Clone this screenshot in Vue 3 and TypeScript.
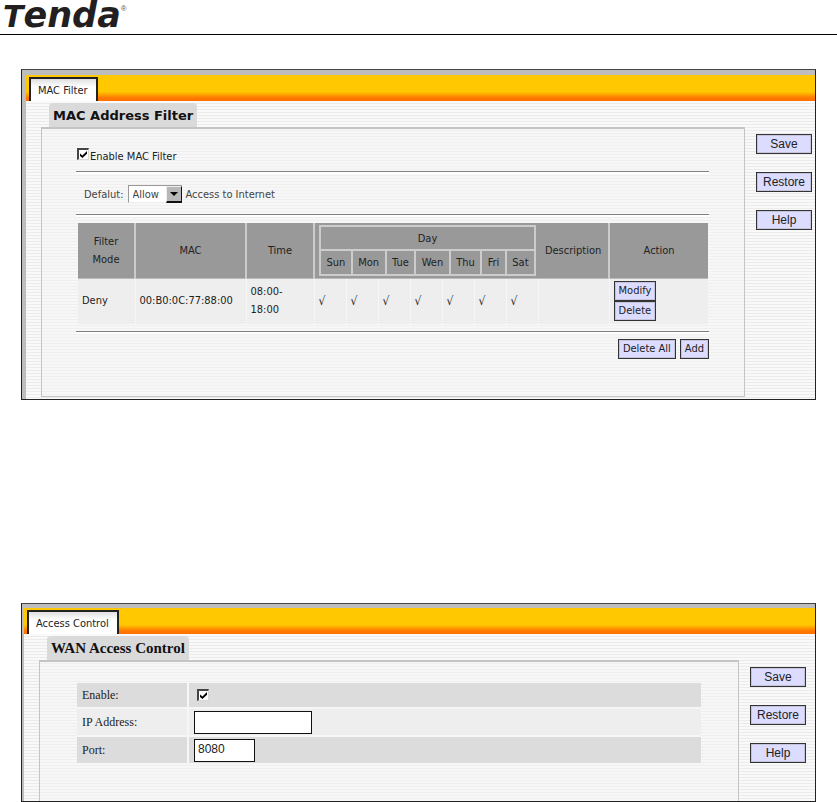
<script setup lang="ts">
import { ref } from 'vue'

interface FilterRule {
  mode: string
  mac: string
  time: string
  days: boolean[]
  description: string
}

const dayNames: string[] = ['Sun', 'Mon', 'Tue', 'Wen', 'Thu', 'Fri', 'Sat']
const sideActions: string[] = ['Save', 'Restore', 'Help']

const filterEnabled = ref(true)
const defaultPolicy = ref('Allow')
const rules = ref<FilterRule[]>([
  {
    mode: 'Deny',
    mac: '00:B0:0C:77:88:00',
    time: '08:00-18:00',
    days: [true, true, true, true, true, true, true],
    description: '',
  },
])

const wanEnabled = ref(true)
const wanIp = ref('')
const wanPort = ref('8080')
</script>

<template>
  <div class="page">
    <header class="brand">
      <span class="logo"><span class="cap">T</span>enda</span><span class="reg">®</span>
    </header>

    <section class="panel mac">
      <nav class="tabs"><a class="tab" href="#mac-filter">MAC Filter</a></nav>
      <div class="body">
        <div class="main">
          <h2 class="title">MAC Address Filter</h2>
          <div class="box">
            <div class="enable">
              <input id="mac-enable" v-model="filterEnabled" class="check" type="checkbox" />
              <label for="mac-enable">Enable MAC Filter</label>
            </div>
            <hr />
            <div class="policy">
              <label for="policy">Defalut:</label>
              <span class="picker">
                <select id="policy" v-model="defaultPolicy">
                  <option>Allow</option>
                  <option>Deny</option>
                </select>
                <span class="arrow"></span>
              </span>
              <span>Access to Internet</span>
            </div>
            <hr />
            <table class="rules">
              <colgroup>
                <col class="c-mode" />
                <col class="c-mac" />
                <col class="c-time" />
                <col v-for="d in dayNames" :key="d" class="c-day" />
                <col class="c-desc" />
                <col class="c-act" />
              </colgroup>
              <thead>
                <tr>
                  <th>Filter Mode</th>
                  <th>MAC</th>
                  <th>Time</th>
                  <th class="day-cell" colspan="7">
                    <div class="days">
                      <div class="day-head">Day</div>
                      <div class="day-row">
                        <span v-for="d in dayNames" :key="d">{{ d }}</span>
                      </div>
                    </div>
                  </th>
                  <th>Description</th>
                  <th>Action</th>
                </tr>
              </thead>
              <tbody>
                <tr v-for="rule in rules" :key="rule.mac">
                  <td>{{ rule.mode }}</td>
                  <td>{{ rule.mac }}</td>
                  <td>{{ rule.time }}</td>
                  <td v-for="(on, i) in rule.days" :key="i" class="tick">{{ on ? '√' : '' }}</td>
                  <td>{{ rule.description }}</td>
                  <td>
                    <div class="row-actions">
                      <button type="button" class="btn">Modify</button>
                      <button type="button" class="btn">Delete</button>
                    </div>
                  </td>
                </tr>
              </tbody>
            </table>
            <hr />
            <div class="footer">
              <button type="button" class="btn">Delete All</button>
              <button type="button" class="btn">Add</button>
            </div>
          </div>
        </div>
        <aside class="side">
          <button v-for="a in sideActions" :key="a" type="button" class="btn wide">{{ a }}</button>
        </aside>
      </div>
    </section>

    <section class="panel wan">
      <nav class="tabs"><a class="tab" href="#access-control">Access Control</a></nav>
      <div class="body">
        <div class="main">
          <h2 class="title serif">WAN Access Control</h2>
          <div class="box">
            <table class="form">
              <tbody>
                <tr>
                  <th><label for="wan-enable">Enable:</label></th>
                  <td><input id="wan-enable" v-model="wanEnabled" class="check" type="checkbox" /></td>
                </tr>
                <tr class="light">
                  <th><label for="wan-ip">IP Address:</label></th>
                  <td><input id="wan-ip" v-model="wanIp" class="field long" type="text" /></td>
                </tr>
                <tr>
                  <th><label for="wan-port">Port:</label></th>
                  <td><input id="wan-port" v-model="wanPort" class="field" type="text" /></td>
                </tr>
              </tbody>
            </table>
          </div>
        </div>
        <aside class="side">
          <button v-for="a in sideActions" :key="a" type="button" class="btn wide">{{ a }}</button>
        </aside>
      </div>
    </section>
  </div>
</template>

<style>
body {
  background: #fff;
}
</style>

<style scoped>
.page,
.page * {
  box-sizing: border-box;
}
.page {
  font-family: 'DejaVu Sans Condensed', 'DejaVu Sans', sans-serif;
  font-size: 11px;
  color: #222;
}
.brand {
  display: flex;
  height: 35px;
  padding-left: 3px;
  border-bottom: 1px solid #000;
}
.logo {
  font: italic 700 35px/31px 'DejaVu Sans', sans-serif;
  color: #231f20;
}
.logo .cap {
  font-size: 30px;
}
.reg {
  font: 8px/18px 'Liberation Sans', sans-serif;
  color: #555;
}

.panel {
  margin: 34px 21px 0;
  border: 1px solid #222;
  border-top-color: #444;
  background: #bdbdbd;
}
.mac {
  padding: 5px 0 0 4px;
}
.wan {
  margin-top: 203px;
  padding: 4px 0 0 2px;
}
.tabs {
  display: flex;
  align-items: flex-end;
  height: 26px;
  padding-left: 3px;
  background: linear-gradient(#ffc800 0, #ffc800 64%, #ff7800 88%, #ff7000 100%);
}
.tab {
  height: 24px;
  padding: 0 8px 0 7px;
  border: 2px solid #222;
  border-bottom: 0;
  background: linear-gradient(#e0e0e0, #fff 8px);
  color: #222;
  line-height: 24px;
  text-decoration: none;
}
.body {
  display: flex;
  background: repeating-linear-gradient(#f9f9f9 0, #f9f9f9 2px, #ebebeb 2px, #ebebeb 3px);
}
.main {
  flex: 1;
  min-width: 0;
  padding-left: 15px;
}
.title {
  width: max-content;
  height: 24px;
  margin: 2px 0 0 8px;
  padding: 0 4px;
  border-radius: 4px 4px 0 0;
  background: #dadada;
  font: 700 13px/26px 'DejaVu Sans', sans-serif;
  color: #111;
}
.title.serif {
  font: 700 15px/24px 'Liberation Serif', serif;
}
.box {
  padding: 0 35px 0 34px;
  border: 1px solid #c4c4c4;
  border-top-width: 2px;
  background: rgba(246, 246, 246, 0.4);
}
.mac .box {
  height: 270px;
  margin-bottom: 2px;
}
.wan .box {
  height: 141px;
  padding: 21px 37px 0;
  border-bottom: 0;
}
hr {
  height: 3px;
  margin: 0;
  border: 0;
  border-top: 1px solid #808080;
  background: #fff;
}
.enable {
  display: flex;
  align-items: center;
  gap: 1px;
  height: 42px;
  padding: 12px 0 0 1px;
}
.enable .check {
  margin-bottom: 4px;
}
.policy {
  display: flex;
  align-items: center;
  gap: 4px;
  height: 40px;
  padding-left: 8px;
  color: #444;
}
.picker {
  position: relative;
  display: flex;
  width: 54px;
  height: 18px;
}
.picker select {
  width: 100%;
  padding: 0 0 0 4px;
  appearance: none;
  border: 1px solid #999;
  border-right: 0;
  border-bottom-color: #eee;
  border-radius: 0;
  background: #fff;
  font: inherit;
  color: #444;
}
.arrow {
  position: absolute;
  top: 1px;
  right: 0;
  width: 16px;
  height: 17px;
  border: 1px solid #eee;
  border-right: 1px solid #111;
  border-bottom: 2px solid #111;
  background: #b8b8b8;
  pointer-events: none;
}
.arrow::before {
  content: '';
  position: absolute;
  left: 3px;
  top: 5px;
  border: 4px solid transparent;
  border-top-color: #000;
  border-bottom: 0;
}
.check {
  position: relative;
  flex: none;
  width: 12px;
  height: 12px;
  margin: 0;
  appearance: none;
  border: 1px solid #d8d8d8;
  border-top: 2px solid #444;
  border-left: 2px solid #444;
  background: #fff;
}
.check:checked::before {
  content: '';
  position: absolute;
  inset: 1px;
  background: #000;
  clip-path: polygon(0 35%, 35% 65%, 100% 0, 100% 40%, 35% 100%, 0 72%);
}
.btn {
  height: 20px;
  padding: 0 4px;
  border: 1px solid #333;
  border-radius: 0;
  background: #dcdcff;
  box-shadow: inset 0 0 0 1px #c4c4dc;
  font: inherit;
  line-height: 18px;
  color: #222;
}
.rules {
  width: calc(100% - 3px);
  margin: 6px 0 7px 2px;
  table-layout: fixed;
  border-collapse: collapse;
}
.c-mode { width: 57px; }
.c-mac { width: 111px; }
.c-time { width: 68px; }
.c-day { width: 32px; }
.c-desc { width: 71px; }
.c-act { width: 99px; }
.rules th {
  height: 55px;
  padding: 0 8px;
  background: #999;
  border-bottom: 1px solid #bbb;
  font-weight: 400;
  line-height: 18px;
}
.rules th + th {
  border-left: 2px solid #ccc;
}
.rules th.day-cell {
  padding: 2px 0 2px 4px;
}
.rules th.day-cell + th {
  padding: 0;
  border-left: 0;
}
.days {
  width: 217px;
  border: 2px solid #ccc;
}
.day-head {
  height: 24px;
  border-bottom: 2px solid #ccc;
  line-height: 23px;
}
.day-row {
  display: flex;
  height: 23px;
  line-height: 23px;
}
.day-row span {
  flex: 1 0 auto;
}
.day-row span + span {
  border-left: 2px solid #ccc;
}
.rules td {
  height: 45px;
  padding: 0 4px;
  background: #eee;
  line-height: 18px;
}
.rules td + td {
  border-left: 1px dotted #fff;
}
.rules .tick {
  font-size: 12px;
}
.row-actions {
  display: flex;
  flex-direction: column;
  align-items: flex-start;
}
.footer {
  display: flex;
  justify-content: flex-end;
  gap: 4px;
  padding-top: 5px;
}
.side {
  display: flex;
  flex-direction: column;
  gap: 18px;
  width: 70px;
  padding: 33px 3px 0 11px;
}
.wan .side {
  width: 76px;
  padding: 33px 9px 0 11px;
}
.wide {
  width: 56px;
  padding: 0;
  font-family: 'Liberation Sans', sans-serif;
  font-size: 12px;
}
.form {
  width: 100%;
  border-collapse: collapse;
}
.form th {
  width: 111px;
  padding: 0 5px;
  border-right: 2px solid #f6f6f6;
  font: 12px 'Liberation Serif', serif;
  text-align: left;
}
.form th,
.form td {
  height: 28px;
  border-bottom: 2px solid #f6f6f6;
  background: #dcdcdc;
}
.form tr:first-child > * {
  height: 25px;
}
.form td {
  padding: 0 5px;
}
.form .light th,
.form .light td {
  background: #eee;
}
.form .check {
  display: block;
  margin-left: 3px;
}
.field {
  display: block;
  width: 61px;
  height: 23px;
  padding: 0 3px 3px;
  border: 1px solid #111;
  border-radius: 0;
  background: #fff;
  font: 12px 'Liberation Sans', sans-serif;
  color: #222;
}
.field.long {
  width: 118px;
}
</style>
